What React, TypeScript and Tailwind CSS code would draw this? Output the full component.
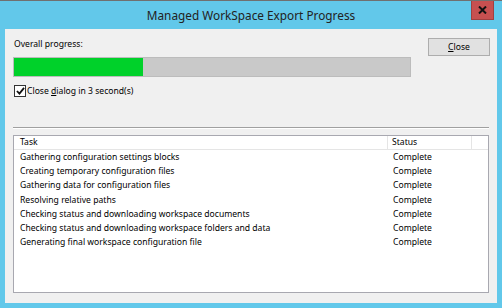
const tasks = [
  "Gathering configuration settings blocks",
  "Creating temporary configuration files",
  "Gathering data for configuration files",
  "Resolving relative paths",
  "Checking status and downloading workspace documents",
  "Checking status and downloading workspace folders and data",
  "Generating final workspace configuration file",
];

export default function App() {
  return (
    <div
      className="w-[502px] h-[308px] bg-[#62c8ea] border-t border-[#707070] flex flex-col text-black"
      style={{ fontFamily: '"Noto Sans", "Open Sans", sans-serif' }}
    >
      {/* title bar */}
      <div className="relative h-[28px] shrink-0 flex items-center justify-center">
        <span className="text-[11.8px] text-[#222] leading-none pt-[1px]">
          Managed WorkSpace Export Progress
        </span>
        <div className="absolute top-0 left-[471px] w-[23px] h-[19px] bg-[#c75050] border border-[#a04040] border-t-0 flex items-center justify-center">
          <svg width="9" height="8" viewBox="0 0 9 8">
            <path d="M1 0.5 L8 7.5 M8 0.5 L1 7.5" stroke="#111" strokeWidth="2" />
          </svg>
        </div>
      </div>

      {/* client */}
      <div className="flex-1 mx-[5px] mb-[5px] bg-[#f0f0f0] px-[8px] flex flex-col text-[8.6px]">
        <div className="flex">
          <div className="flex-1">
            <div className="mt-[8px] h-[14px] leading-[14px] pl-[1px]">Overall progress:</div>
            <div className="mt-[6px] w-[398px] h-[20px] bg-[#c9c9c9] border border-[#bcbcbc] flex">
              <div className="w-[129px] h-full bg-[#00d12a]" />
            </div>
            <div className="mt-[7px] flex items-center gap-[1px] h-[14px]">
              <div className="ml-[1px] w-[12px] h-[12px] border border-[#333] bg-white flex items-center justify-center">
                <svg width="9" height="8" viewBox="0 0 10 9">
                  <path d="M1 4.5 L3.8 7.5 L9 1" stroke="#111" strokeWidth="2" fill="none" />
                </svg>
              </div>
              <span className="leading-[14px]">
                Close <span className="underline">d</span>ialog in 3 second(s)
              </span>
            </div>
          </div>
          <div className="mt-[9px] mr-[-1px] w-[62px] h-[18px] bg-[#e1e1e1] border border-[#adadad] flex items-center justify-center leading-none">
            <span>
              <span className="underline">C</span>lose
            </span>
          </div>
        </div>

        <div className="mt-[29px] h-[2px] border-t border-[#a0a0a0] border-b border-b-white" />

        <div className="mt-[6px] mb-[10px] flex-1 bg-white border border-[#a8a8b0] flex flex-col">
          <div className="flex h-[14px] leading-[13px] border-b border-[#e5e5e5]">
            <div className="w-[374px] pl-[6px] border-r border-[#e5e5e5]">Task</div>
            <div className="w-[84px] pl-[4px] border-r border-[#e5e5e5]">Status</div>
            <div className="flex-1" />
          </div>
          <div>
            {tasks.map((t) => (
              <div key={t} className="flex h-[14.2px] leading-[14.2px]">
                <div className="w-[374px] pl-[6px] whitespace-nowrap overflow-hidden">{t}</div>
                <div className="pl-[5px]">Complete</div>
              </div>
            ))}
          </div>
        </div>
      </div>
    </div>
  );
}
